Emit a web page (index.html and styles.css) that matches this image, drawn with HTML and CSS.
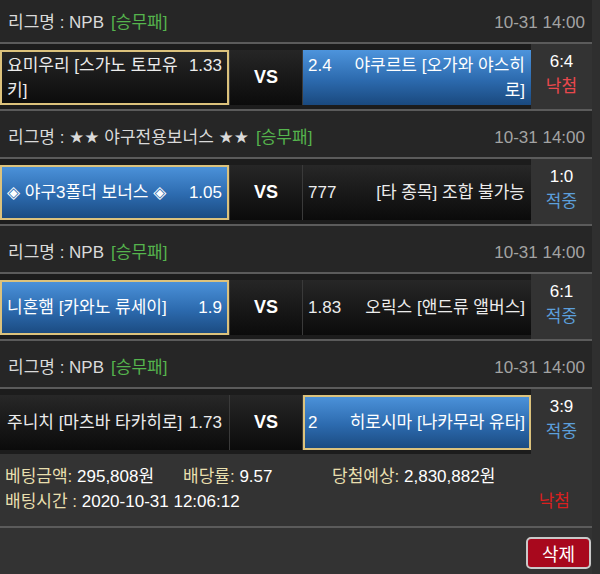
FILE: index.html
```html
<!DOCTYPE html>
<html lang="ko">
<head>
<meta charset="utf-8">
<title>배팅내역</title>
<link rel="stylesheet" href="styles.css">
</head>
<body>
<div class="slip">
  <section class="game first">
    <div class="league"><span class="lname">리그명 : NPB</span><span class="type">[승무패]</span><span class="time">10-31 14:00</span></div>
    <div class="match">
      <div class="teams">
        <div class="row">
          <div class="team home pick"><div class="inner"><span class="name">요미우리 [스가노 토모유키]</span><span class="odds">1.33</span></div></div>
          <div class="vs">VS</div>
          <div class="team away win"><div class="inner"><span class="odds">2.4</span><span class="name">야쿠르트 [오가와 야스히로]</span></div></div>
        </div>
      </div>
      <div class="score"><span>6:4</span><span class="lose">낙첨</span></div>
    </div>
  </section>

  <section class="game">
    <div class="league"><span class="lname">리그명 : ★★ 야구전용보너스 ★★</span><span class="type">[승무패]</span><span class="time">10-31 14:00</span></div>
    <div class="match">
      <div class="teams">
        <div class="row">
          <div class="team home win pick"><div class="inner"><span class="name">◈ 야구3폴더 보너스 ◈</span><span class="odds">1.05</span></div></div>
          <div class="vs">VS</div>
          <div class="team away"><div class="inner"><span class="odds">777</span><span class="name">[타 종목] 조합 불가능</span></div></div>
        </div>
      </div>
      <div class="score"><span>1:0</span><span class="hit">적중</span></div>
    </div>
  </section>

  <section class="game">
    <div class="league"><span class="lname">리그명 : NPB</span><span class="type">[승무패]</span><span class="time">10-31 14:00</span></div>
    <div class="match">
      <div class="teams">
        <div class="row">
          <div class="team home win pick"><div class="inner"><span class="name">니혼햄 [카와노 류세이]</span><span class="odds">1.9</span></div></div>
          <div class="vs">VS</div>
          <div class="team away"><div class="inner"><span class="odds">1.83</span><span class="name">오릭스 [앤드류 앨버스]</span></div></div>
        </div>
      </div>
      <div class="score"><span>6:1</span><span class="hit">적중</span></div>
    </div>
  </section>

  <section class="game last">
    <div class="league"><span class="lname">리그명 : NPB</span><span class="type">[승무패]</span><span class="time">10-31 14:00</span></div>
    <div class="match">
      <div class="teams">
        <div class="row">
          <div class="team home"><div class="inner"><span class="name">주니치 [마츠바 타카히로]</span><span class="odds">1.73</span></div></div>
          <div class="vs">VS</div>
          <div class="team away win pick"><div class="inner"><span class="odds">2</span><span class="name">히로시마 [나카무라 유타]</span></div></div>
        </div>
      </div>
      <div class="score"><span>3:9</span><span class="hit">적중</span></div>
    </div>
  </section>

  <div class="info">
    <div class="line one">
      <span><span class="lbl">베팅금액:</span> 295,808원</span>
      <span><span class="lbl">배당률:</span> 9.57</span>
      <span><span class="lbl">당첨예상:</span> 2,830,882원</span>
    </div>
    <div class="line two">
      <span><span class="lbl">배팅시간 :</span> 2020-10-31 12:06:12</span>
      <span class="result">낙첨</span>
    </div>
  </div>

  <div class="foot">
    <button class="del" type="button">삭제</button>
  </div>
</div>
</body>
</html>
```

FILE: styles.css
```css
* {
  box-sizing: border-box;
}

html,
body {
  margin: 0;
  padding: 0;
}

body {
  width: 600px;
  height: 574px;
  overflow: hidden;
  background: #2f2f2f;
  font-family: "Liberation Sans", "DejaVu Sans", "Noto Sans CJK KR", sans-serif;
  font-size: 17px;
  color: #fff;
}

.slip {
  width: 592px;
  min-height: 574px;
  background: #333;
}

.game {
  border-bottom: 2px solid #5b5b5b;
}

.game.last {
  border-bottom: 0;
}

.league {
  height: 48px;
  display: flex;
  align-items: center;
  padding: 7px 7px 0 8px;
  background: #262626;
  border-bottom: 2px solid #5b5b5b;
  line-height: 20px;
}

.game.first .league {
  height: 44px;
  padding-top: 3px;
}

.lname {
  color: #dadada;
}

.type {
  color: #55b44d;
  margin-left: 7px;
}

.time {
  margin-left: auto;
  color: #a3a3a3;
}

.match {
  display: flex;
  height: 65px;
}

.teams {
  width: 531px;
  padding: 6px 0 4px;
  background: #1c1c1c;
}

.row {
  display: flex;
  gap: 1px;
  height: 55px;
  background: #3a3a3a;
}

.team {
  display: flex;
  align-items: center;
  border: 2px solid transparent;
  background: linear-gradient(#272727, #0b0b0b);
  background-origin: border-box;
  line-height: 25px;
  color: #ececec;
}

.home {
  width: 229px;
  padding: 0 5px;
}

.away {
  flex: 1;
  padding: 0 4px 0 3px;
}

.team.win {
  background: linear-gradient(#4d94dc, #2c6aae 55%, #1a497e);
  background-origin: border-box;
  color: #fff;
}

.team.pick {
  border-color: #dcc27c;
}

.inner {
  display: flex;
  align-items: flex-start;
  width: 100%;
}

.name {
  flex: 1;
  min-width: 0;
}

.home .odds {
  margin-left: 2px;
}

.away .odds {
  min-width: 36px;
}

.away .name {
  text-align: right;
}

.vs {
  width: 72px;
  display: flex;
  align-items: center;
  justify-content: center;
  font-weight: bold;
  font-size: 18px;
  background: linear-gradient(#262626, #0b0b0b);
}

.score {
  flex: 1;
  display: flex;
  flex-direction: column;
  align-items: center;
  padding-top: 5px;
  line-height: 25px;
}

.lose {
  color: #e9484d;
}

.hit {
  color: #5c9fdb;
}

.info {
  height: 74px;
  padding: 10px 0 0 5px;
  border-bottom: 2px solid #5b5b5b;
  line-height: 25px;
}

.line.one {
  display: grid;
  grid-template-columns: 178px 149px auto;
}

.line.two {
  display: flex;
}

.lbl {
  color: #e8dfae;
}

.result {
  margin-left: auto;
  margin-right: 22px;
  color: #d9201f;
}

.foot {
  display: flex;
  justify-content: flex-end;
  padding: 9px 1px 0 0;
}

.del {
  width: 65px;
  height: 32px;
  display: flex;
  align-items: center;
  justify-content: center;
  padding: 0;
  background: #a8081d;
  border: 2px solid #c9c9c9;
  border-radius: 5px;
  color: #fff;
  font-family: inherit;
  font-size: 18px;
}
```
